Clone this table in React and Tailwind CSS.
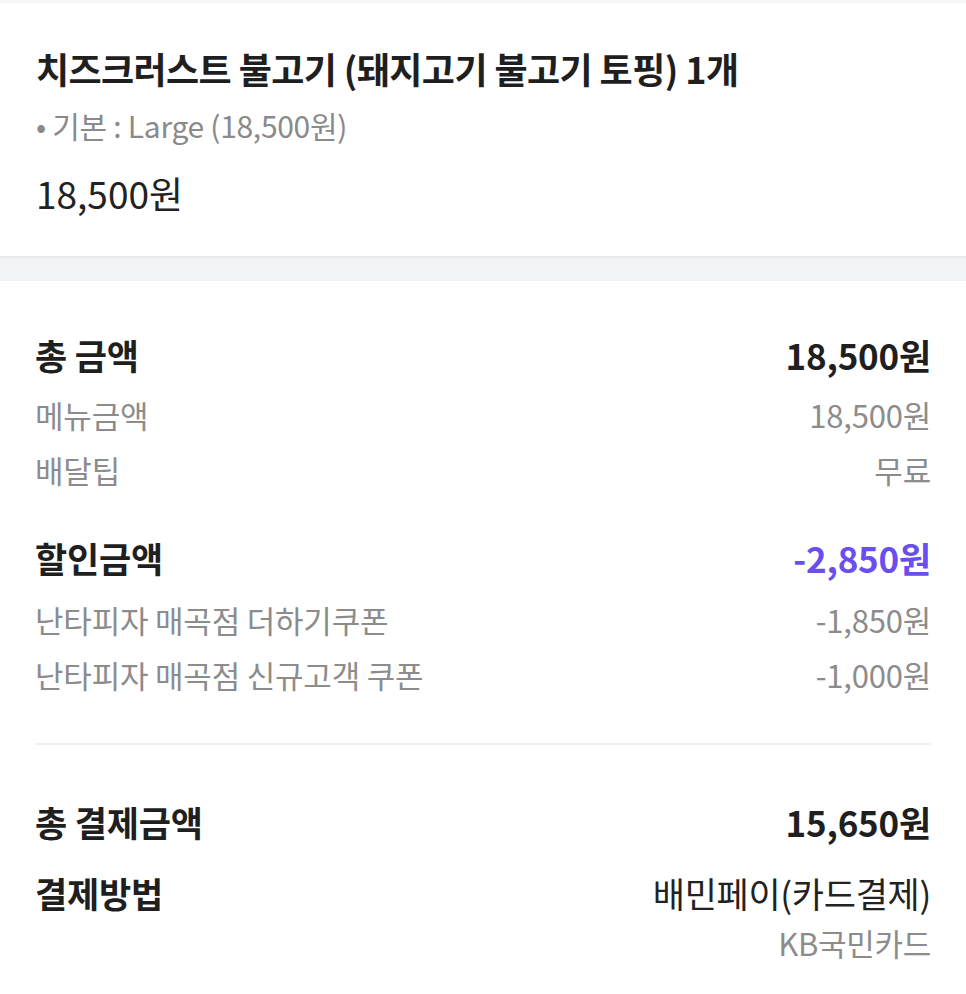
export default function App() {
  const font = { fontFamily: '"Noto Sans CJK KR", "Noto Sans", sans-serif' };
  const head = "flex justify-between items-center h-[50px] text-[35px] font-bold tracking-[-0.2px] text-[#1f1f1f]";
  const sub = "flex justify-between items-center h-[50px] text-[31px] tracking-[-0.2px] text-[#8c8c8c]";
  return (
    <div className="w-[966px] h-[994px] bg-white overflow-hidden text-[#222]" style={font}>
      <div className="h-[3px] bg-[#f4f5f7]" />
      <div className="px-[36px] pt-[40px] h-[253px]">
        <div className="text-[36px] font-bold leading-[50px] tracking-[-0.6px] text-[#1f1f1f] whitespace-nowrap">
          치즈크러스트 불고기 (돼지고기 불고기 토핑) 1개
        </div>
        <div className="mt-[12px] text-[30px] leading-[40px] tracking-[-0.3px] text-[#8a8a8a]">
          • 기본 : Large (18,500원)
        </div>
        <div className="mt-[28px] text-[37px] leading-[40px] tracking-[0px] text-[#222]">18,500원</div>
      </div>
      <div className="h-[25px] bg-[#f2f3f5] border-t-2 border-[#e7e9ec]" />
      <div className="px-[35px] pt-[49px]">
        <div className={head}>
          <span>총 금액</span>
          <span>18,500원</span>
        </div>
        <div className={"mt-[10px] " + sub}>
          <span>메뉴금액</span>
          <span>18,500원</span>
        </div>
        <div className={"mt-[5px] " + sub}>
          <span>배달팁</span>
          <span>무료</span>
        </div>
        <div className={"mt-[38px] " + head}>
          <span>할인금액</span>
          <span className="text-[#6a4ff0]">-2,850원</span>
        </div>
        <div className={"mt-[12px] " + sub}>
          <span>난타피자 매곡점 더하기쿠폰</span>
          <span>-1,850원</span>
        </div>
        <div className={"mt-[5px] " + sub}>
          <span>난타피자 매곡점 신규고객 쿠폰</span>
          <span>-1,000원</span>
        </div>
        <div className="mt-[43px] h-[2px] bg-[#f0f0f0]" />
        <div className={"mt-[52px] " + head}>
          <span>총 결제금액</span>
          <span>15,650원</span>
        </div>
        <div className="mt-[21px] flex justify-between items-start">
          <span className="text-[35px] font-bold tracking-[-0.2px] leading-[50px] text-[#1f1f1f]">결제방법</span>
          <div className="flex flex-col items-end">
            <span className="text-[35px] tracking-[-0.3px] leading-[50px] text-[#222]">배민페이(카드결제)</span>
            <span className="text-[31px] tracking-[-0.3px] leading-[50px] text-[#8c8c8c]">KB국민카드</span>
          </div>
        </div>
      </div>
    </div>
  );
}
